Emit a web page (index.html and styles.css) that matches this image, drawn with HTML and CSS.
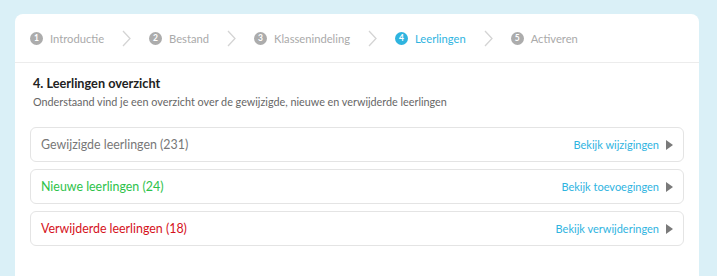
FILE: index.html
```html
<!DOCTYPE html>
<html lang="nl">
<head>
    <meta charset="UTF-8">
    <meta name="viewport" content="width=device-width, initial-scale=1.0">
    <title>Leerlingen importeren</title>
    <link rel="stylesheet" href="styles.css">
</head>
<body>
    <div class="card">
        <!-- Stappen -->
        <nav class="steps">
            <div class="step"><span class="step-num">1</span>Introductie</div>
            <svg class="step-sep" viewBox="0 0 9 17"><polyline points="1,1 8,8.5 1,16"/></svg>
            <div class="step"><span class="step-num">2</span>Bestand</div>
            <svg class="step-sep" viewBox="0 0 9 17"><polyline points="1,1 8,8.5 1,16"/></svg>
            <div class="step"><span class="step-num">3</span>Klassenindeling</div>
            <svg class="step-sep" viewBox="0 0 9 17"><polyline points="1,1 8,8.5 1,16"/></svg>
            <div class="step active"><span class="step-num">4</span>Leerlingen</div>
            <svg class="step-sep" viewBox="0 0 9 17"><polyline points="1,1 8,8.5 1,16"/></svg>
            <div class="step"><span class="step-num">5</span>Activeren</div>
        </nav>

        <section class="content">
            <h2 class="title">4. Leerlingen overzicht</h2>
            <p class="subtitle">Onderstaand vind je een overzicht over de gewijzigde, nieuwe en verwijderde leerlingen</p>

            <div class="rows">
                <div class="row">
                    <span class="row-label changed">Gewijzigde leerlingen (231)</span>
                    <a class="row-link" href="#">Bekijk wijzigingen<span class="arrow"></span></a>
                </div>
                <div class="row">
                    <span class="row-label new">Nieuwe leerlingen (24)</span>
                    <a class="row-link" href="#">Bekijk toevoegingen<span class="arrow"></span></a>
                </div>
                <div class="row">
                    <span class="row-label removed">Verwijderde leerlingen (18)</span>
                    <a class="row-link" href="#">Bekijk verwijderingen<span class="arrow"></span></a>
                </div>
            </div>
        </section>
    </div>
</body>
</html>
```

FILE: styles.css
```css
/* General styles */
body {
    margin: 0;
    padding: 14px 18px 0 15px;
    background-color: #daf0f7;
    font-family: Lato, "Noto Sans", sans-serif;
    height: 276px;
    box-sizing: border-box;
    overflow: hidden;
}

.card {
    background-color: #ffffff;
    border-radius: 8px 8px 0 0;
    height: 100%;
}

/* Steps bar */
.steps {
    display: flex;
    align-items: center;
    height: 49px;
    padding: 0 15px;
    border-bottom: 1px solid #ececec;
    box-sizing: border-box;
}

.step {
    display: flex;
    align-items: center;
    font-size: 11.2px;
    color: #aaaaaa;
}

.step-num {
    width: 13px;
    height: 13px;
    border-radius: 50%;
    background-color: #acacac;
    color: #ffffff;
    font-size: 8.5px;
    font-weight: bold;
    display: flex;
    align-items: center;
    justify-content: center;
    margin-right: 7px;
}

.step.active {
    color: #2fb4df;
}

.step.active .step-num {
    background-color: #2fb4df;
}

/* chevron between steps */
.step-sep {
    width: 9px;
    height: 17px;
    margin: 0 18px 0 18px;
    fill: none;
    stroke: #d4d4d4;
    stroke-width: 1.3;
}

/* Content */
.content {
    padding: 12px 15px 0 15px;
}

.title {
    margin: 0 0 0 3px;
    font-size: 12.7px;
    font-weight: bold;
    color: #222222;
}

.subtitle {
    margin: 4px 0 0 3px;
    font-size: 10.8px;
    color: #666666;
}

.rows {
    display: flex;
    flex-direction: column;
    gap: 7px;
    margin-top: 19px;
}

.row {
    display: flex;
    align-items: center;
    justify-content: space-between;
    height: 35px;
    padding: 0 10px;
    border: 1px solid #e4e4e4;
    border-radius: 6px;
    box-sizing: border-box;
}

.row-label {
    font-size: 12.4px;
}

.row-label.changed {
    color: #777777;
}

.row-label.new {
    color: #2dc24a;
}

.row-label.removed {
    color: #d5121b;
}

.row-link {
    display: flex;
    align-items: center;
    font-size: 11px;
    color: #2fb4df;
    text-decoration: none;
}

/* small play triangle */
.arrow {
    width: 0;
    height: 0;
    border-top: 5px solid transparent;
    border-bottom: 5px solid transparent;
    border-left: 7px solid #7a7a7a;
    margin-left: 7px;
}
```
